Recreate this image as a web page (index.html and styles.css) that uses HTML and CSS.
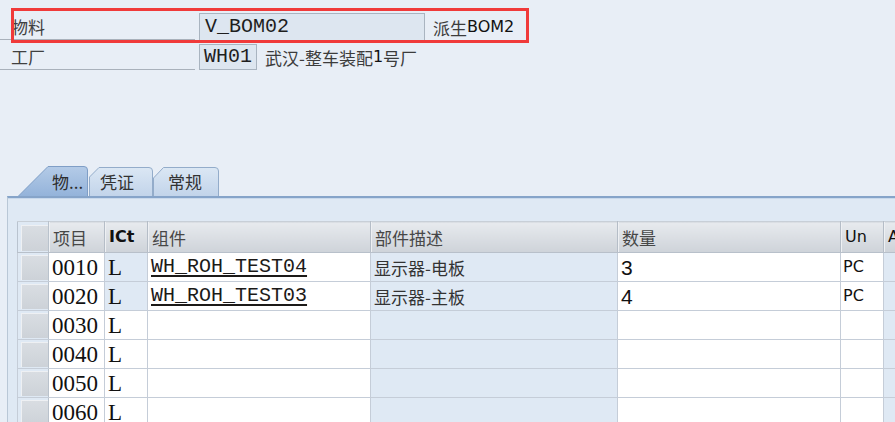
FILE: index.html
```html
<!DOCTYPE html>
<html lang="zh">
<head>
<meta charset="utf-8">
<title>BOM</title>
<link rel="stylesheet" href="styles.css">
</head>
<body>
<div class="page">
  <div class="fields">
    <div class="frow r1">
      <div class="lbl">物料</div>
      <div class="inp i1">V_BOM02</div>
      <div class="desc">派生<span class="lat">BOM2</span></div>
    </div>
    <div class="frow r2">
      <div class="lbl">工厂</div>
      <div class="inp i2">WH01</div>
      <div class="desc">武汉-整车装配<span class="lat">1</span>号厂</div>
    </div>
    <div class="redbox"></div>
  </div>

  <div class="tabs">
    <div class="tab t1">
      <svg class="tabshape" viewBox="0 0 70 30" preserveAspectRatio="none">
        <defs>
          <linearGradient id="gsel" x1="0" y1="0" x2="0" y2="1">
            <stop offset="0" stop-color="#b4cbe7"/>
            <stop offset="1" stop-color="#94b3da"/>
          </linearGradient>
        </defs>
        <path d="M0.5 30 L30 0.5 H66 Q69.5 0.5 69.5 4 V30" fill="url(#gsel)" stroke="#7f9ec6"/>
      </svg>
      <span class="tabtext">物...</span>
    </div>
    <div class="tab t2">
      <svg class="tabshape" viewBox="0 0 64 29" preserveAspectRatio="none">
        <defs>
          <linearGradient id="gun" x1="0" y1="0" x2="0" y2="1">
            <stop offset="0" stop-color="#dbe7f4"/>
            <stop offset="1" stop-color="#c2d4ea"/>
          </linearGradient>
        </defs>
        <path d="M0.5 29 V10 L10 0.5 H60 Q63.5 0.5 63.5 4 V29" fill="url(#gun)" stroke="#93acca"/>
      </svg>
      <span class="tabtext">凭证</span>
    </div>
    <div class="tab t3">
      <svg class="tabshape" viewBox="0 0 66 29" preserveAspectRatio="none">
        <path d="M0.5 29 V11 L10.5 0.5 H62 Q65.5 0.5 65.5 4 V29" fill="url(#gun)" stroke="#93acca"/>
      </svg>
      <span class="tabtext">常规</span>
    </div>
  </div>

  <div class="panel">
    <table class="grid">
      <colgroup>
        <col class="c-rh"><col class="c-item"><col class="c-ict"><col class="c-comp"><col class="c-desc"><col class="c-qty"><col class="c-un"><col class="c-a">
      </colgroup>
      <thead>
        <tr>
          <th class="rh"><div class="btn"></div></th>
          <th class="cjk">项目</th>
          <th class="lat b">ICt</th>
          <th class="cjk">组件</th>
          <th class="cjk">部件描述</th>
          <th class="cjk">数量</th>
          <th class="lat">Un</th>
          <th class="lat">A</th>
        </tr>
      </thead>
      <tbody>
        <tr>
          <td class="rh"><div class="btn"></div></td>
          <td class="num">0010</td>
          <td class="num blue">L</td>
          <td class="code"><span class="link">WH_ROH_TEST04</span></td>
          <td class="cjk blue">显示器-电板</td>
          <td class="qty">3</td>
          <td class="lat">PC</td>
          <td class="blue"></td>
        </tr>
        <tr>
          <td class="rh"><div class="btn"></div></td>
          <td class="num">0020</td>
          <td class="num blue">L</td>
          <td class="code"><span class="link">WH_ROH_TEST03</span></td>
          <td class="cjk blue">显示器-主板</td>
          <td class="qty">4</td>
          <td class="lat">PC</td>
          <td class="blue"></td>
        </tr>
        <tr>
          <td class="rh"><div class="btn"></div></td>
          <td class="num">0030</td>
          <td class="num">L</td>
          <td></td>
          <td class="blue"></td>
          <td></td>
          <td></td>
          <td class="blue"></td>
        </tr>
        <tr>
          <td class="rh"><div class="btn"></div></td>
          <td class="num">0040</td>
          <td class="num">L</td>
          <td></td>
          <td class="blue"></td>
          <td></td>
          <td></td>
          <td class="blue"></td>
        </tr>
        <tr>
          <td class="rh"><div class="btn"></div></td>
          <td class="num">0050</td>
          <td class="num">L</td>
          <td></td>
          <td class="blue"></td>
          <td></td>
          <td></td>
          <td class="blue"></td>
        </tr>
        <tr>
          <td class="rh"><div class="btn"></div></td>
          <td class="num">0060</td>
          <td class="num">L</td>
          <td></td>
          <td class="blue"></td>
          <td></td>
          <td></td>
          <td class="blue"></td>
        </tr>
      </tbody>
    </table>
  </div>
</div>
</body>
</html>
```

FILE: styles.css
```css
* { box-sizing: border-box; }

html, body {
  margin: 0;
  padding: 0;
  width: 895px;
  height: 422px;
  overflow: hidden;
  background: #e8eef6;
}

body {
  font-family: "Noto Sans CJK SC", "Noto Sans", sans-serif;
  font-size: 17px;
  color: #3a3a3a;
}

.page {
  width: 895px;
  height: 422px;
  overflow: hidden;
}

.fields {
  position: relative;
  padding-top: 13px;
}

.frow {
  display: flex;
  align-items: flex-start;
}

.r1 { height: 28px; }
.r2 { height: 26px; margin-top: 3px; }

.lbl {
  width: 195px;
  padding-left: 11px;
  border-bottom: 1px solid #a9b1bb;
  display: flex;
  align-items: center;
  color: #404040;
  line-height: 1;
}
.r1 .lbl { height: 27px; }
.r2 .lbl { height: 26px; }

.inp {
  margin-left: 4px;
  height: 100%;
  background: #dde6f0;
  border: 1px solid #a9b4c0;
  font-family: "Liberation Mono", monospace;
  font-size: 20px;
  color: #1e1e1e;
  padding-left: 5px;
  display: flex;
  align-items: center;
  line-height: 1;
}
.i1 { width: 226px; }
.i2 { width: 58px; padding-left: 4px; }

.desc {
  margin-left: 8px;
  height: 100%;
  display: flex;
  align-items: center;
  color: #3c3c3c;
  line-height: 1;
}

.lat {
  font-family: "DejaVu Sans", "Liberation Sans", sans-serif;
  font-size: 16px;
  color: #111;
}
.desc .lat { font-size: 16px; }

.redbox {
  position: absolute;
  left: 11px;
  top: 8px;
  width: 518px;
  height: 35px;
  border: 3px solid #f03a3a;
}

.tabs {
  display: flex;
  align-items: flex-end;
  margin-top: 96px;
  height: 30px;
  padding-left: 18px;
}

.tab {
  position: relative;
  display: flex;
  align-items: center;
  color: #333;
  font-size: 17px;
}
.tabshape {
  position: absolute;
  left: 0;
  top: 0;
  width: 100%;
  height: 100%;
}
.tabtext {
  position: relative;
  line-height: 1;
}

.t1 { width: 70px; height: 30px; padding-left: 34px; color: #2c2c2c; }
.t2 { width: 64px; height: 29px; margin-left: 1px; padding-left: 11px; }
.t3 { width: 66px; height: 29px; padding-left: 15px; }

.panel {
  margin-left: 7px;
  height: 240px;
  background: #dfe9f4;
  border-top: 2px solid #86a4c9;
  border-left: 1px solid #b9c7d6;
  box-shadow: inset 0 1px 0 #c9d9ec;
  padding-top: 23px;
  padding-left: 9px;
  overflow: hidden;
}

.grid {
  border-collapse: collapse;
  table-layout: fixed;
  width: 920px;
  border-left: 1px solid #b9c3cf;
}

.c-rh { width: 31px; }
.c-item { width: 56px; }
.c-ict { width: 43px; }
.c-comp { width: 223px; }
.c-desc { width: 247px; }
.c-qty { width: 223px; }
.c-un { width: 43px; }
.c-a { width: 54px; }

.grid th {
  height: 31px;
  padding: 0 0 0 4px;
  text-align: left;
  font-weight: normal;
  background: linear-gradient(#e7eaee, #ced3d9);
  border-right: 1px solid #b5bdc7;
  border-bottom: 1px solid #b8c0ca;
  border-top: 1px solid #c8cfd7;
  box-shadow: inset 1px 0 0 #eef0f3;
  color: #474747;
  font-size: 17px;
  line-height: 1;
  white-space: nowrap;
  overflow: hidden;
}
.grid th.lat { font-size: 16px; color: #111; }
.grid th.b { font-weight: bold; }

.grid td {
  height: 29px;
  padding: 0 0 0 3px;
  background: #ffffff;
  border: 1px solid #c5cdd8;
  line-height: 1;
  white-space: nowrap;
  overflow: hidden;
  color: #111;
}

.grid td.blue { background: #dfe9f4; }

.grid .rh {
  padding: 2px 0 1px 3px;
  background: #dfe9f4;
  border-right: 1px solid #b9c2cc;
}
.grid th.rh { background: #dfe9f4; box-shadow: none; }

.btn {
  height: 100%;
  background: linear-gradient(#d9dde2, #cdd2d8);
  border-top: 1px solid #eef0f3;
  border-left: 1px solid #eef0f3;
}
.grid th.rh .btn { height: 26px; }

.num {
  font-family: "Liberation Serif", serif;
  font-size: 23px;
  color: #111;
}
.code {
  font-family: "Liberation Mono", monospace;
  font-size: 20px;
}
.link {
  text-decoration: underline;
  text-underline-offset: 3px;
  color: #1c1a18;
}
.grid td.cjk { color: #333; font-size: 17px; padding-left: 3px; }
.qty {
  font-family: "Liberation Sans", sans-serif;
  font-size: 21px;
  font-weight: 300;
  color: #222;
}
.grid td.lat { font-size: 16px; padding-left: 2px; }
```
